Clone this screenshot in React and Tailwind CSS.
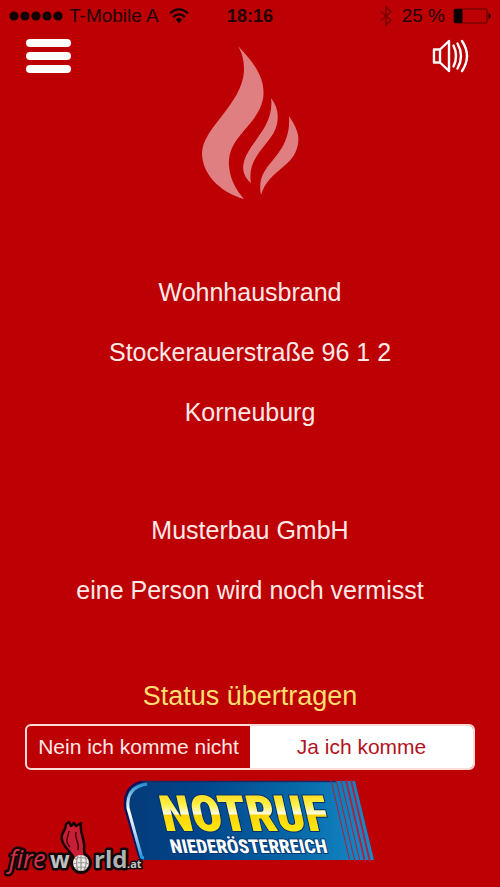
import { useState } from "react";

const incident = [
  ["Wohnhausbrand", "Stockerauerstraße 96 1 2", "Korneuburg"],
  ["Musterbau GmbH", "eine Person wird noch vermisst"],
];

function StatusBar() {
  return (
    <div className="grid h-8 grid-cols-[1fr_auto_1fr] items-center px-2 text-[19px] leading-8 text-[#240000]">
      <div className="flex items-center gap-1.5">
        <svg width="55" height="12" viewBox="0 0 55 12" fill="#140000" aria-hidden="true">
          <circle cx="6" cy="6" r="4.6" />
          <circle cx="17" cy="6" r="4.6" />
          <circle cx="28" cy="6" r="4.6" />
          <circle cx="39" cy="6" r="4.6" />
          <circle cx="50" cy="6" r="4.6" />
        </svg>
        <span className="whitespace-nowrap">T-Mobile A</span>
        <svg className="ml-1" width="20" height="16" viewBox="0 0 20 16" fill="none" stroke="#140000" strokeWidth="2.3" aria-hidden="true">
          <path d="M1 5.6C6-.1 14-.1 19 5.6" />
          <path d="M4.2 9.1c3.3-3.6 8.3-3.6 11.6 0" />
          <path d="M6.6 11.6c2-2.2 4.8-2.2 6.8 0L10 15.2z" fill="#140000" stroke="none" />
        </svg>
      </div>
      <span className="text-[18px] font-bold">18:16</span>
      <div className="flex items-center justify-end gap-2">
        <svg width="14" height="20" viewBox="0 0 14 20" fill="none" stroke="#7a0000" strokeWidth="1.5" aria-hidden="true">
          <path d="M1 5.5l10 9L6 19V1l5 4.500-10 9" />
        </svg>
        <span className="whitespace-nowrap">25 %</span>
        <svg width="39" height="16" viewBox="0 0 39 16" aria-hidden="true">
          <rect x="1" y="1" width="33" height="14" rx="1.5" fill="none" stroke="#5c0000" strokeWidth="1.2" />
          <rect x="1" y="1" width="8.5" height="14" rx="1" fill="#0c0000" />
          <path d="M35.5 5c3 1 3 5 0 6z" fill="#200000" />
        </svg>
      </div>
    </div>
  );
}

function Flame() {
  return (
    <svg width="100" height="156" viewBox="0 0 100 156" fill="#df7f82" aria-hidden="true">
      <path d="M38 1C48 12 67 30 63 54C57 82 27 91 29 121C30 135 37 146 44 154C25 149 3 133 2 109C2 83 42 60 44 26C44 14 42 8 38 1Z" />
      <path d="M71 53C77 61 79 69 77 79C73 99 46 110 51 138C43 131 42 123 44 117C48 98 75 82 71 53Z" />
      <path d="M89 71C95 80 100 89 98 99C94 123 69 124 61 150C59 139 61 131 66 124C75 111 91 99 89 71Z" />
    </svg>
  );
}

function Header() {
  return (
    <header className="flex items-start justify-between px-[26px] pt-[7px]">
      <button type="button" aria-label="Menü" className="flex w-[45px] flex-col gap-[5px]">
        <span className="h-2 w-full rounded-full bg-white" />
        <span className="h-2 w-full rounded-full bg-white" />
        <span className="h-2 w-full rounded-full bg-white" />
      </button>
      <div className="pt-[6px]">
        <Flame />
      </div>
      <button type="button" aria-label="Ton" className="flex w-[45px] justify-end">
        <svg width="42" height="34" viewBox="0 0 42 34" fill="none" stroke="#fff" strokeWidth="2.4" strokeLinecap="round" strokeLinejoin="round" aria-hidden="true">
          <path d="M2 10.5h6v13H2zM8 10.5L17 2v30l-9-8.500" />
          <path d="M21.500 6.500q5 10.500 0 21" />
          <path d="M25.500 4.500q7 12.500 0 25" />
          <path d="M30 2q10 15 0 30" />
        </svg>
      </button>
    </header>
  );
}

function StatusChoice() {
  const [coming, setComing] = useState(true);
  const base = "h-full whitespace-nowrap text-[21px] leading-6 ";
  const on = "bg-white text-[#b3121c]";
  const off = "bg-transparent text-[#ffe9e6]";
  return (
    <section className="px-[25px]">
      <h2 className="text-center text-[27px] leading-8 text-[#ffdf70]">Status übertragen</h2>
      <div className="mt-3 grid h-[46px] grid-cols-2 overflow-hidden rounded-md border-2 border-[#ffd9d6]">
        <button type="button" aria-pressed={!coming} onClick={() => setComing(false)} className={base + (coming ? off : on)}>
          Nein ich komme nicht
        </button>
        <button type="button" aria-pressed={coming} onClick={() => setComing(true)} className={base + (coming ? on : off)}>
          Ja ich komme
        </button>
      </div>
    </section>
  );
}

function NotrufLogo() {
  return (
    <svg width="254" height="82" viewBox="0 0 254 82" role="img" aria-label="Notruf Niederösterreich">
      <defs>
        <linearGradient id="plate" x1="0" y1="0" x2="1" y2="0">
          <stop offset="0" stopColor="#063a78" />
          <stop offset="0.3" stopColor="#00458b" />
          <stop offset="0.7" stopColor="#086aa9" />
          <stop offset="1" stopColor="#168cca" />
        </linearGradient>
        <linearGradient id="gold" x1="0" y1="0" x2="0" y2="1">
          <stop offset="0.15" stopColor="#ffd91a" />
          <stop offset="0.35" stopColor="#fff04a" />
          <stop offset="0.5" stopColor="#fffce0" />
          <stop offset="0.53" stopColor="#ffd500" />
          <stop offset="0.8" stopColor="#ffe817" />
        </linearGradient>
        <linearGradient id="rim" x1="0" y1="0" x2="0" y2="1">
          <stop offset="0" stopColor="#2b8fd0" />
          <stop offset="0.35" stopColor="#ffffff" />
          <stop offset="0.65" stopColor="#b9dcf4" />
          <stop offset="1" stopColor="#1e9be0" />
        </linearGradient>
      </defs>
      <path d="M20 1H232L251 80H20Q16 80 15 76L1 28Q-1 4 20 1Z" fill="url(#plate)" />
      <path d="M20 1.500Q0 5 2 28L16 76Q17 79 20 79.500" fill="none" stroke="#190f55" strokeWidth="2" />
      <path d="M24 4Q3 7 5 28L18 75Q18 78 21 78" fill="none" stroke="url(#rim)" strokeWidth="3" />
      <path d="M20 1.500H214" stroke="#1c2862" strokeWidth="1.500" />
      <g stroke="#b51c3a">
        <path d="M208 0L227 82M213 0L232 82M218 0L237 82" strokeWidth="1" />
        <path d="M223 0L242 82M228 0L247 82" strokeWidth="1.800" />
      </g>
      <g transform="skewX(13)" fontFamily="'Roboto Condensed','DejaVu Sans Condensed','Liberation Sans',sans-serif">
        <text x="30" y="51" fontSize="50" fontWeight="900" fill="url(#gold)" stroke="#00306f" strokeWidth="2" paintOrder="stroke">NOTRUF</text>
        <text x="32" y="73" fontSize="19" fontWeight="800" fill="#fff" stroke="#003978" strokeWidth="2" paintOrder="stroke">NIEDERÖSTERREICH</text>
      </g>
    </svg>
  );
}

function FireworldLogo() {
  return (
    <svg className="absolute bottom-1 left-1" width="140" height="62" viewBox="0 0 140 62" role="img" aria-label="fireworld.at">
      <g fontFamily="'Open Sans','Noto Sans',sans-serif" stroke="#140707" strokeLinejoin="round" paintOrder="stroke">
        <text x="5" y="47" fontSize="25" fontStyle="italic" fontWeight="500" fill="#d3314a" strokeWidth="5">fire</text>
        <text x="46" y="47" fontSize="23" fontWeight="700" fill="#bfc2c3" strokeWidth="5">w</text>
        <text x="90" y="47" fontSize="24" fontWeight="700" fill="#aeb1b2" strokeWidth="5">rld</text>
        <text x="123" y="47" fontSize="11" fontWeight="700" fill="#c5c7c8" strokeWidth="3">.at</text>
      </g>
      <circle cx="77" cy="42" r="11" fill="#170808" />
      <path d="M70 37C66 29 56 24 58 14C59 10 62 9 62 3L65 1L67 5L70 2L72 5L77 2C75 12 82 20 80 28C80 31 80 34 83 38Z" fill="#c81e36" stroke="#190000" strokeWidth="2.500" strokeLinejoin="round" />
      <path d="M65 10C64 17 60 20 66 26M72 11C70 18 76 21 74 29" fill="none" stroke="#380008" strokeWidth="1.300" />
      <circle cx="77" cy="42" r="8" fill="#eeeae6" />
      <path d="M71 38Q77 35 83 38M69 43Q77 40 85 43M71 47Q77 45 83 47M74 35Q71 42 74 49M77 34V50M81 35Q84 42 80 49" fill="none" stroke="#969696" strokeWidth="1.200" />
    </svg>
  );
}

export default function App() {
  return (
    <div className="relative flex min-h-screen flex-col overflow-hidden bg-[#bd0004] font-['Liberation_Sans',Arial,sans-serif]">
      <StatusBar />
      <Header />
      <main className="flex flex-1 flex-col">
        <div className="flex flex-col gap-[58px] pt-[61px] text-center text-[25px] leading-[60px] text-[#ffe9e6]">
          {incident.map((group) => (
            <div key={group[0]}>
              {group.map((line) => (
                <p key={line}>{line}</p>
              ))}
            </div>
          ))}
        </div>
        <div className="mt-[60px]">
          <StatusChoice />
        </div>
      </main>
      <footer className="flex justify-center pb-[25px]">
        <NotrufLogo />
      </footer>
      <FireworldLogo />
    </div>
  );
}
